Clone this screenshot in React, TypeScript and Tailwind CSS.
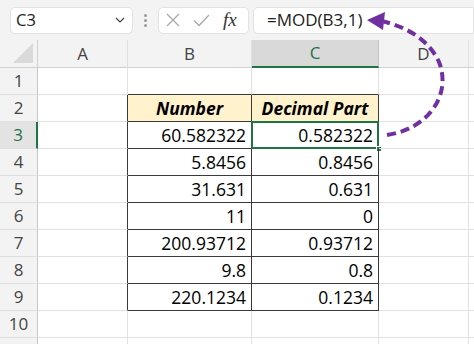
const COLS = [38, 90, 124, 127, 90, 90];
const HEADERS = ["", "A", "B", "C", "D", ""];
const ROWS = 11;

const DATA: Record<number, [string, string]> = {
  3: ["60.582322", "0.582322"],
  4: ["5.8456", "0.8456"],
  5: ["31.631", "0.631"],
  6: ["11", "0"],
  7: ["200.93712", "0.93712"],
  8: ["9.8", "0.8"],
  9: ["220.1234", "0.1234"],
};

const inTable = (r: number, c: number) => r >= 2 && r <= 9 && c >= 2 && c <= 3;

const font = { fontFamily: '"Open Sans", "Noto Sans", sans-serif' };

function Cell({ r, c }: { r: number; c: number }) {
  const dark = inTable(r, c);
  const rightDark = dark || inTable(r, c + 1);
  const bottomDark = dark || inTable(r + 1, c);
  const selected = r === 3 && c === 3;

  let text = "";
  let cls = "justify-end pr-[5px]";
  if (r === 2 && c === 2) text = "Number";
  if (r === 2 && c === 3) text = "Decimal Part";
  if (r === 2 && dark) cls = "justify-center font-bold italic bg-[#fff2cc]";
  if (DATA[r] && (c === 2 || c === 3)) text = DATA[r][c - 2];

  return (
    <div
      className={`relative flex items-center h-full text-[17.5px] text-black ${cls} ${
        rightDark ? "border-r border-r-[#3a3a3a]" : "border-r border-r-[#e1e1e1]"
      } ${bottomDark ? "border-b border-b-[#3a3a3a]" : "border-b border-b-[#e1e1e1]"}`}
    >
      {text}
      {selected && (
        <>
          <div className="absolute -left-px -top-px -right-px -bottom-px border-2 border-[#217346] pointer-events-none" />
          <div className="absolute -right-[4px] -bottom-[4px] w-[6px] h-[6px] bg-[#217346] border border-white" />
        </>
      )}
    </div>
  );
}

export default function App() {
  return (
    <div className="relative w-[474px] h-[344px] overflow-hidden bg-white select-none" style={font}>
      {/* formula bar */}
      <div className="flex items-center h-[40px] bg-[#f3f3f3] pl-[10px]">
        <div className="flex items-center justify-between w-[123px] h-[27px] bg-white border border-[#e3e3e3] rounded-[5px] pl-[5px] pr-[7px] text-[16.5px] text-[#222]">
          <span>C3</span>
          <svg width="10" height="6" viewBox="0 0 10 6" fill="none" stroke="#444" strokeWidth="1.2">
            <path d="M1 1l4 4 4-4" />
          </svg>
        </div>
        <div className="flex flex-col gap-[2px] mx-[11px]">
          <span className="w-[3px] h-[3px] rounded-full bg-[#9a9a9a]" />
          <span className="w-[3px] h-[3px] rounded-full bg-[#9a9a9a]" />
          <span className="w-[3px] h-[3px] rounded-full bg-[#9a9a9a]" />
        </div>
        <div className="flex items-center w-[91px] h-[27px] bg-white border border-[#e3e3e3] rounded-[5px] pl-[7px] gap-[13px]">
          <svg width="14" height="14" viewBox="0 0 14 14" stroke="#a8a8a8" strokeWidth="1.3">
            <path d="M1 1l12 12M13 1L1 13" />
          </svg>
          <svg width="17" height="13" viewBox="0 0 17 13" fill="none" stroke="#a8a8a8" strokeWidth="1.3">
            <path d="M1 6.5l5 5L16 1" />
          </svg>
          <span
            className="italic text-[19px] text-[#333] leading-none -mt-[2px]"
            style={{ fontFamily: '"Liberation Serif", "DejaVu Serif", serif' }}
          >
            fx
          </span>
        </div>
        <div className="flex items-center flex-1 h-[27px] ml-[4px] bg-white border border-[#e3e3e3] rounded-l-[5px] pl-[13px] text-[17px] text-[#222]">
          =MOD(B3,1)
        </div>
      </div>

      {/* sheet */}
      <div
        className="grid"
        style={{ gridTemplateColumns: COLS.map((w) => `${w}px`).join(" "), gridTemplateRows: `28px repeat(${ROWS}, 27px)` }}
      >
        {HEADERS.map((h, c) =>
          c === 0 ? (
            <div key="corner" className="relative bg-[#f3f3f3] border-r border-b border-[#d0d0d0]">
              <svg className="absolute right-[4px] bottom-[4px]" width="20" height="20" viewBox="0 0 20 20">
                <path d="M20 0V20H0Z" fill="#d9d9d9" />
              </svg>
            </div>
          ) : (
            <div
              key={`h${c}`}
              className={`flex items-center justify-center text-[17px] ${
                c === 3
                  ? "bg-[#d9d9d9] text-[#217346] border-b-2 border-b-[#217346] border-r border-r-[#c4c4c4]"
                  : "bg-[#f3f3f3] text-[#444] border-b border-b-[#d0d0d0] border-r border-r-[#e0e0e0]"
              }`}
            >
              {h}
            </div>
          )
        )}
        {Array.from({ length: ROWS }, (_, i) => i + 1).map((r) =>
          COLS.map((_, c) =>
            c === 0 ? (
              <div
                key={`${r}-h`}
                className={`flex items-center justify-center text-[17px] border-b border-b-[#e0e0e0] ${
                  r === 3
                    ? "bg-[#e3e3e3] text-[#217346] border-r-2 border-r-[#217346]"
                    : "bg-[#f3f3f3] text-[#444] border-r border-r-[#c8c8c8]"
                }`}
              >
                {r <= 10 ? r : ""}
              </div>
            ) : (
              <Cell key={`${r}-${c}`} r={r} c={c} />
            )
          )
        )}
      </div>

      {/* purple arrow */}
      <svg className="absolute left-0 top-0 pointer-events-none" width="474" height="344" viewBox="0 0 474 344">
        <path
          d="M387 135 C 428 129, 452 95, 439 62 C 428 38, 404 26, 381 21"
          fill="none"
          stroke="#7030a0"
          strokeWidth="4"
          strokeDasharray="9 5"
        />
        <path d="M367 20 L385 12 L383 30 Z" fill="#7030a0" />
      </svg>
    </div>
  );
}
